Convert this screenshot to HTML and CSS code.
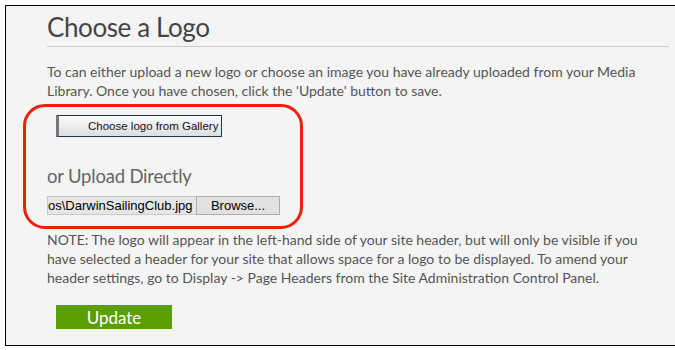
FILE: index.html
```html
<!doctype html>
<html lang="en">
  <head>
    <meta charset="UTF-8" />
    <title>Choose a Logo</title>
    <link rel="stylesheet" href="styles.css">
  </head>
  <body>
    <div class="panel">
      <h1>Choose a Logo</h1>
      <p class="intro">
        To can either upload a new logo or choose an image you have already uploaded from your Media
        Library. Once you have chosen, click the 'Update' button to save.
      </p>
      <div class="highlight">
        <button class="gallery-btn" type="button">Choose logo from Gallery</button>
        <h2>or Upload Directly</h2>
        <div class="file-field">
          <span class="file-name">os\DarwinSailingClub.jpg</span>
          <button class="browse-btn" type="button">Browse...</button>
        </div>
      </div>
      <p class="note">
        NOTE: The logo will appear in the left-hand side of your site header, but will only be visible if you
        have selected a header for your site that allows space for a logo to be displayed. To amend your
        header settings, go to Display -&gt; Page Headers from the Site Administration Control Panel.
      </p>
      <button class="update-btn" type="button">Update</button>
    </div>
  </body>
</html>
```

FILE: styles.css
```css
html,
body {
  margin: 0;
  padding: 0;
  background: #fff;
}
body {
  font-family: Lato, sans-serif;
  color: #555;
}
.panel {
  margin: 5px;
  width: 622px;
  height: 339px;
  padding: 0 23px 0 41px;
  border: 1px solid #000;
  background: #f4f4f4;
  overflow: hidden;
}
h1 {
  margin: 4px 0 0 0;
  padding-bottom: 2px;
  font-size: 26px;
  line-height: 34px;
  font-weight: 400;
  color: #444;
  letter-spacing: -0.4px;
  border-bottom: 1px solid #ccc;
}
.intro,
.note {
  margin: 0;
  font-size: 14px;
  line-height: 19px;
  color: #555;
}
.intro {
  margin-top: 15px;
}
.highlight {
  margin: 4px 0 0 -24px;
  width: 253px;
  height: 111px;
  padding: 8px 0 0 21px;
  border: 3px solid #f01e0a;
  border-radius: 22px;
}
.gallery-btn {
  display: block;
  margin-left: 9px;
  width: 166px;
  height: 22px;
  padding: 0 0 0 29px;
  text-align: left;
  font-family: "Liberation Sans", Arial, sans-serif;
  font-size: 11.5px;
  color: #111;
  border: 1px solid #1c3550;
  border-left: 3px solid #777;
  background: linear-gradient(#fdfdfd, #dcdde2);
}
h2 {
  margin: 27px 0 0 0;
  font-size: 18.5px;
  line-height: 24px;
  font-weight: 400;
  color: #666;
  letter-spacing: -0.2px;
}
.file-field {
  display: flex;
  margin-top: 8px;
  font-family: "Liberation Sans", Arial, sans-serif;
  font-size: 13px;
  color: #000;
}
.file-name {
  width: 148px;
  height: 17px;
  line-height: 17px;
  overflow: hidden;
  white-space: nowrap;
  background: #e6e6e6;
  border: 1px solid #c9c9c9;
  border-right: none;
}
.browse-btn {
  width: 84px;
  height: 19px;
  padding: 0;
  font-family: "Liberation Sans", Arial, sans-serif;
  font-size: 13px;
  color: #000;
  background: #e1e1e1;
  border: 1px solid #adadad;
}
.note {
  margin-top: 1px;
}
.update-btn {
  display: block;
  margin: 18px 0 0 9px;
  width: 116px;
  height: 24px;
  padding: 0;
  font-family: Lato, sans-serif;
  font-size: 17px;
  color: #fff;
  background: #5a9e00;
  border: none;
}
```
